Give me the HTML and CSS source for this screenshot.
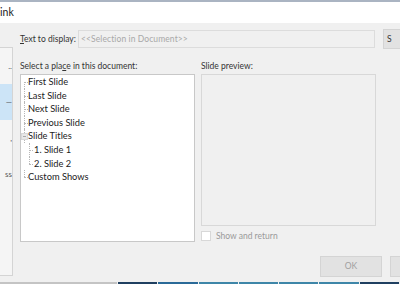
FILE: index.html
```html
<!DOCTYPE html>
<html lang="en">
<head>
    <meta charset="UTF-8">
    <title>Edit Hyperlink</title>
    <link rel="stylesheet" href="styles.css">
</head>
<body>
    <div class="topline"></div>
    <div class="titlebar">ink</div>
    <div class="dialog">
        <!-- Link-to side bar (cut off) -->
        <div class="sidebar">
            <div class="side-item">..</div>
            <div class="side-item active">—</div>
            <div class="side-item">,</div>
            <div class="side-item">ss</div>
        </div>
        <div class="main">
            <div class="display-row">
                <span class="label"><u>T</u>ext to display:</span>
                <div class="input">&lt;&lt;Selection in Document&gt;&gt;</div>
                <div class="btn side-btn">S</div>
            </div>
            <div class="panes">
                <div class="pane">
                    <div class="label">Select a pla<u>c</u>e in this document:</div>
                    <ul class="tree">
                        <li class="leaf">First Slide</li>
                        <li class="leaf">Last Slide</li>
                        <li class="leaf">Next Slide</li>
                        <li class="leaf">Previous Slide</li>
                        <li class="node"><span class="minus"></span>Slide Titles</li>
                        <li class="leaf sub">1. Slide 1</li>
                        <li class="leaf sub last-sub">2. Slide 2</li>
                        <li class="leaf last">Custom Shows</li>
                    </ul>
                </div>
                <div class="pane">
                    <div class="label">Slide preview:</div>
                    <div class="preview"></div>
                    <label class="check"><span class="box"></span>Show and return</label>
                </div>
            </div>
            <div class="buttons">
                <div class="btn">OK</div>
                <div class="btn"></div>
            </div>
        </div>
    </div>
    <div class="taskbar">
        <span class="seg gray"></span>
        <span class="seg s1"></span>
        <span class="seg s2"></span>
        <span class="seg s3"></span>
        <span class="seg s3"></span>
        <span class="seg s3"></span>
        <span class="seg s3"></span>
        <span class="seg s1"></span>
    </div>
</body>
</html>
```

FILE: styles.css
```css
body {
    margin: 0;
    width: 400px;
    height: 284px;
    overflow: hidden;
    background: #f0f0f0;
    font-family: Lato, "Noto Sans", sans-serif;
    font-size: 8.5px;
    color: #1a1a1a;
    display: flex;
    flex-direction: column;
}
.topline {
    height: 2px;
    background: #aab4c2;
}
.titlebar {
    height: 21px;
    line-height: 21px;
    background: #fff;
    font-size: 10.5px;
    color: #222;
}
.dialog {
    flex: 1;
    display: flex;
    min-height: 0;
}
.sidebar {
    width: 12px;
    margin-top: 24px;
    margin-bottom: 6px;
    background: #f5f5f5;
    border: 1px solid #d4d4d4;
    border-left: none;
    overflow: hidden;
    font-size: 8px;
    color: #555;
    flex: none;
}
.side-item {
    height: 36px;
    line-height: 36px;
    text-align: right;
    white-space: nowrap;
}
.side-item.active {
    background: #cce4f7;
}
.main {
    flex: 1;
    padding: 6px 0 0 7px;
    display: flex;
    flex-direction: column;
    min-width: 0;
}
.display-row {
    display: flex;
    align-items: center;
    height: 19px;
}
.display-row > * {
    flex: none;
}
.label {
    white-space: nowrap;
    color: #333;
}
.display-row .label {
    width: 58px;
}
.input {
    width: 293px;
    height: 16px;
    line-height: 16px;
    border: 1px solid #dcdcdc;
    padding-left: 2px;
    color: #a8a8a8;
    letter-spacing: 0.1px;
}
.btn {
    width: 60px;
    height: 18px;
    line-height: 18px;
    background: #e2e2e2;
    border: 1px solid #d4d4d4;
    text-align: center;
    color: #a0a0a0;
    flex: none;
}
.side-btn {
    margin-left: 8px;
    color: #333;
    text-align: left;
    padding-left: 3px;
}
.panes {
    display: flex;
    gap: 6px;
    margin-top: 13px;
}
.pane {
    width: 175px;
    display: flex;
    flex-direction: column;
}
.pane .label {
    height: 13px;
    line-height: 11px;
}
.tree {
    list-style: none;
    margin: 0;
    padding: 0;
    height: 168px;
    background: #fff;
    border: 1px solid #c8c8c8;
    box-sizing: border-box;
    font-size: 9.3px;
    color: #222;
}
.tree li {
    position: relative;
    height: 13.6px;
    line-height: 13.6px;
    padding-left: 7px;
    white-space: nowrap;
}
/* dotted connector lines */
.tree li::before {
    content: "";
    position: absolute;
    left: 3px;
    top: 0;
    height: 100%;
    border-left: 1px dotted #b8b8b8;
}
.tree li::after {
    content: "";
    position: absolute;
    left: 3px;
    top: 7px;
    width: 4px;
    border-top: 1px dotted #b8b8b8;
}
.tree li:first-child::before {
    top: 7px;
    height: 7px;
}
.tree li.last::before {
    height: 7px;
}
.tree li.sub {
    padding-left: 13px;
}
.tree li.sub::after {
    left: 8px;
}
.tree li.sub::before {
    left: 8px;
}
.tree li.last-sub::before {
    height: 7px;
}
.minus {
    position: absolute;
    left: 0;
    top: 4px;
    width: 5px;
    height: 5px;
    background: #e8e8e8;
    border: 1px solid #d8d8d8;
    z-index: 1;
}
.minus::after {
    content: "";
    position: absolute;
    left: 1px;
    top: 2px;
    width: 3px;
    border-top: 1px solid #aaa;
}
.preview {
    height: 152px;
    border: 1px solid #d8d8d8;
    box-sizing: border-box;
}
.check {
    display: flex;
    align-items: center;
    gap: 5px;
    margin-top: 5px;
    color: #9a9a9a;
}
.box {
    width: 8px;
    height: 8px;
    background: #fff;
    border: 1px solid #d8d8d8;
}
.buttons {
    display: flex;
    gap: 8px;
    margin-top: 14px;
    padding-left: 300px;
}
.buttons .btn {
    height: 19px;
}
.taskbar {
    height: 2px;
    display: flex;
    flex: none;
}
.seg {
    width: 40px;
    height: 2px;
    border-right: 1px solid #f0f0f0;
}
.seg.gray {
    width: 119px;
    background: #c4c4c4;
}
.s1 { background: #1f3f60; }
.s2 { background: #2a6a98; }
.s3 { background: #3e86a8; }
```
